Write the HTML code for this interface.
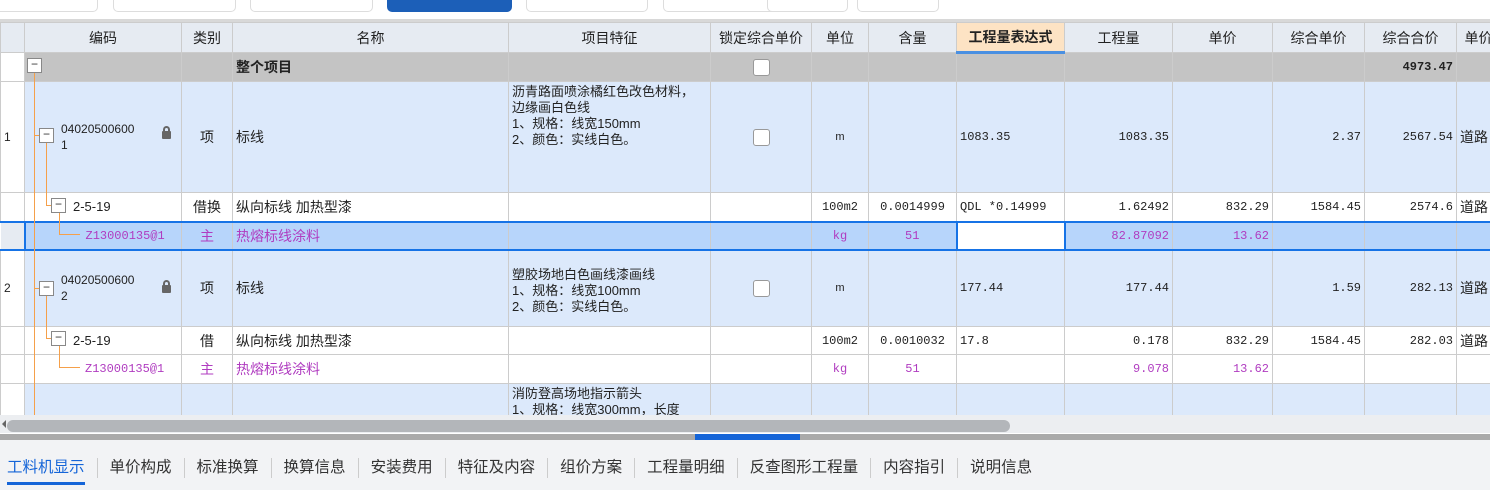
<!DOCTYPE html>
<html><head><meta charset="utf-8"><style>
*{margin:0;padding:0;box-sizing:border-box}
body{width:1490px;height:490px;overflow:hidden;background:#fff;font-family:"Liberation Sans","Noto Sans CJK SC",sans-serif;font-size:14px;color:#222;position:relative}
.btn{position:absolute;top:-8px;height:20px;border:1px solid #ddd;border-radius:5px;background:#fff}
table{position:absolute;left:0;top:22px;border-collapse:collapse;table-layout:fixed;width:1500px}
td{border:1px solid #ccc;padding:0 3px;overflow:hidden;white-space:nowrap;vertical-align:middle}
tr.h td{background:#e6ebf2;text-align:center;height:30px}
tr.g td{background:#c4c4c4;height:29px}
tr.b td{background:#dce9fb}
tr.w td{background:#fff}
tr.s td{background:#b7d5fb;border-top:2px solid #1673e6;border-bottom:2px solid #1673e6}
.n{font-family:"Liberation Mono",monospace;font-size:12px;text-align:right}
.c{text-align:center}
.p{color:#b03cc0}
.cb{display:inline-block;width:17px;height:17px;border:1px solid #999;border-radius:3px;background:#fff;vertical-align:middle}
.ex{position:absolute;width:15px;height:15px;border:1px solid #888;background:#fff;font-size:12px;line-height:11px;text-align:center;color:#333}
.vl{position:absolute;width:1px;background:#f5a04a}
.hl{position:absolute;height:1px;background:#f5a04a}
.feat{white-space:normal;line-height:16px;vertical-align:top;padding-top:2px;font-size:13px}
.tabs span{border-left:1px solid #ccc;padding:0 12px}
</style></head><body>
<div class="btn" style="left:-10px;width:108px"></div>
<div class="btn" style="left:113px;width:123px"></div>
<div class="btn" style="left:250px;width:123px"></div>
<div class="btn" style="left:387px;width:125px;background:#1c5fb8;border-color:#1c5fb8"></div>
<div class="btn" style="left:526px;width:122px"></div>
<div class="btn" style="left:663px;width:122px"></div>
<div class="btn" style="left:767px;width:81px"></div>
<div class="btn" style="left:857px;width:82px"></div>
<div style="position:absolute;left:0;top:19px;width:1490px;height:3px;background:#d8d8d8"></div>
<table>
<colgroup><col style="width:24px"><col style="width:157px"><col style="width:51px"><col style="width:276px"><col style="width:202px"><col style="width:101px"><col style="width:57px"><col style="width:88px"><col style="width:108px"><col style="width:108px"><col style="width:100px"><col style="width:92px"><col style="width:92px"><col style="width:44px"></colgroup>
<tr class="h"><td></td><td>编码</td><td>类别</td><td>名称</td><td>项目特征</td><td>锁定综合单价</td><td>单位</td><td>含量</td><td style="background:#fde3c4;font-weight:bold;border-bottom:3px solid #4a90e2">工程量表达式</td><td>工程量</td><td>单价</td><td>综合单价</td><td>综合合价</td><td>单价</td></tr>
<tr class="g"><td style="background:#fff"></td><td></td><td></td><td style="font-weight:bold">整个项目</td><td></td><td class="c"><span class="cb"></span></td><td></td><td></td><td style="background:#c4c4c4"></td><td></td><td></td><td></td><td class="n" style="font-weight:bold">4973.47</td><td></td></tr>
<tr class="b" style="height:111px"><td style="background:#fff;font-size:12px">1</td><td style="padding-left:36px;font-size:12px;line-height:16px;white-space:normal">04020500600<br>1</td><td class="c">项</td><td>标线</td><td class="feat" style="padding-right:10px">沥青路面喷涂橘红色改色材料，边缘画白色线<br>1、规格：线宽150mm<br>2、颜色：实线白色。</td><td class="c"><span class="cb"></span></td><td class="c" style="font-size:11px">m</td><td></td><td class="n" style="text-align:left">1083.35</td><td class="n">1083.35</td><td></td><td class="n">2.37</td><td class="n">2567.54</td><td>道路</td></tr>
<tr class="w" style="height:29px"><td></td><td style="padding-left:48px;font-size:13px">2-5-19</td><td class="c">借换</td><td>纵向标线 加热型漆</td><td></td><td></td><td class="n c">100m2</td><td class="n c">0.0014999</td><td class="n" style="text-align:left">QDL *0.14999</td><td class="n">1.62492</td><td class="n">832.29</td><td class="n">1584.45</td><td class="n">2574.6</td><td>道路</td></tr>
<tr class="s" style="height:28px"><td style="background:#e6ebf2;border-left:none"></td><td class="p n" style="text-align:left;padding-left:60px;border-left:2px solid #1673e6">Z13000135@1</td><td class="c p">主</td><td class="p">热熔标线涂料</td><td></td><td></td><td class="c p n">kg</td><td class="c p n">51</td><td style="background:#fff;border:2px solid #1673e6"></td><td class="n p">82.87092</td><td class="n p">13.62</td><td></td><td></td><td></td></tr>
<tr class="b" style="height:77px"><td style="background:#fff;font-size:12px">2</td><td style="padding-left:36px;font-size:12px;line-height:16px;white-space:normal">04020500600<br>2</td><td class="c">项</td><td>标线</td><td class="feat" style="padding-top:16px">塑胶场地白色画线漆画线<br>1、规格：线宽100mm<br>2、颜色：实线白色。</td><td class="c"><span class="cb"></span></td><td class="c" style="font-size:11px">m</td><td></td><td class="n" style="text-align:left">177.44</td><td class="n">177.44</td><td></td><td class="n">1.59</td><td class="n">282.13</td><td>道路</td></tr>
<tr class="w" style="height:28px"><td></td><td style="padding-left:48px;font-size:13px">2-5-19</td><td class="c">借</td><td>纵向标线 加热型漆</td><td></td><td></td><td class="n c">100m2</td><td class="n c">0.0010032</td><td class="n" style="text-align:left">17.8</td><td class="n">0.178</td><td class="n">832.29</td><td class="n">1584.45</td><td class="n">282.03</td><td>道路</td></tr>
<tr class="w" style="height:29px"><td></td><td class="p n" style="text-align:left;padding-left:60px">Z13000135@1</td><td class="c p">主</td><td class="p">热熔标线涂料</td><td></td><td></td><td class="c p n">kg</td><td class="c p n">51</td><td></td><td class="n p">9.078</td><td class="n p">13.62</td><td></td><td></td><td></td></tr>
<tr class="b" style="height:40px"><td style="background:#fff"></td><td></td><td></td><td></td><td class="feat">消防登高场地指示箭头<br>1、规格：线宽300mm，长度</td><td></td><td></td><td></td><td></td><td></td><td></td><td></td><td></td><td></td></tr>
</table>
<div class="vl" style="left:34px;top:66px;height:350px"></div>
<div class="ex" style="left:27px;top:58px">−</div>
<div class="hl" style="left:34px;top:135px;width:6px"></div>
<div class="ex" style="left:39px;top:128px">−</div>
<div class="vl" style="left:46px;top:143px;height:62px"></div>
<div class="hl" style="left:46px;top:205px;width:6px"></div>
<div class="ex" style="left:51px;top:198px">−</div>
<div class="vl" style="left:59px;top:213px;height:21px"></div>
<div class="hl" style="left:59px;top:234px;width:21px"></div>
<div class="hl" style="left:34px;top:288px;width:6px"></div>
<div class="ex" style="left:39px;top:281px">−</div>
<div class="vl" style="left:46px;top:296px;height:42px"></div>
<div class="hl" style="left:46px;top:338px;width:6px"></div>
<div class="ex" style="left:51px;top:331px">−</div>
<div class="vl" style="left:59px;top:346px;height:21px"></div>
<div class="hl" style="left:59px;top:367px;width:21px"></div>
<div style="position:absolute;left:162px;top:131px;width:9px;height:8px;background:#666;border-radius:1px"></div>
<div style="position:absolute;left:163px;top:126px;width:7px;height:7px;border:2px solid #666;border-bottom:none;border-radius:4px 4px 0 0"></div>
<div style="position:absolute;left:162px;top:285px;width:9px;height:8px;background:#666;border-radius:1px"></div>
<div style="position:absolute;left:163px;top:280px;width:7px;height:7px;border:2px solid #666;border-bottom:none;border-radius:4px 4px 0 0"></div>
<div style="position:absolute;left:0;top:415px;width:1490px;height:18px;background:#eceef1"></div>
<div style="position:absolute;left:2px;top:420px;width:0;height:0;border-top:4px solid transparent;border-bottom:4px solid transparent;border-right:4px solid #666"></div>
<div style="position:absolute;left:7px;top:420px;width:1003px;height:12px;background:#b3b6ba;border-radius:6px"></div>
<div style="position:absolute;left:0;top:434px;width:1490px;height:6px;background:#aaa"></div>
<div style="position:absolute;left:695px;top:434px;width:105px;height:6px;background:#1565d8"></div>
<div style="position:absolute;left:0;top:440px;width:1490px;height:50px;background:#f2f3f5"></div>
<div class="tabs" style="position:absolute;left:0;top:458px;height:20px;font-size:15.5px;display:flex;color:#333;line-height:20px;white-space:nowrap">
<span style="border:none;padding:0 12px 0 7px;color:#1565d8">工料机显示</span><span>单价构成</span><span>标准换算</span><span>换算信息</span><span>安装费用</span><span>特征及内容</span><span>组价方案</span><span>工程量明细</span><span>反查图形工程量</span><span>内容指引</span><span>说明信息</span>
</div>
<div style="position:absolute;left:7px;top:482px;width:78px;height:3px;background:#1565d8"></div>
</body></html>
